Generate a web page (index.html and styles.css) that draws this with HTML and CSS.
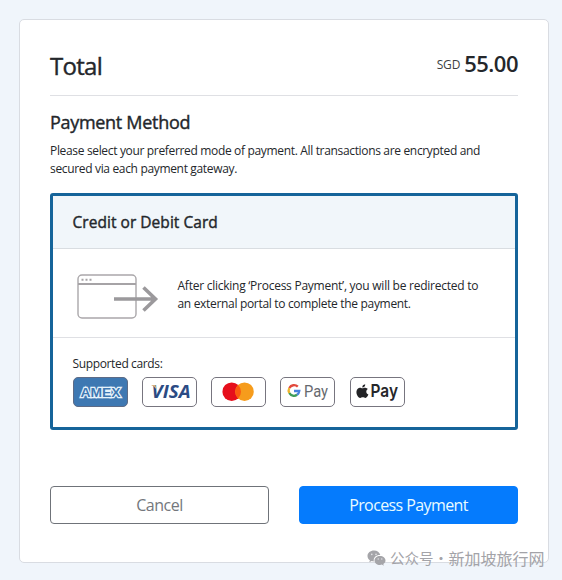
FILE: index.html
```html
<!DOCTYPE html>
<html lang="en">
<head>
<meta charset="utf-8">
<title>Payment</title>
<link rel="stylesheet" href="styles.css">
</head>
<body>
<main class="panel">
  <header class="total">
    <h1 class="total-label">Total</h1>
    <div class="amount"><span class="currency">SGD</span><strong class="value">55.00</strong></div>
  </header>
  <h2 class="title">Payment Method</h2>
  <p class="intro">Please select your preferred mode of payment. All transactions are encrypted and<br>secured via each payment gateway.</p>
  <section class="method">
    <h3 class="method-title">Credit or Debit Card</h3>
    <div class="redirect">
      <svg class="redirect-icon" width="82" height="46" viewBox="0 0 82 46" fill="none">
        <rect x="1" y="1" width="58" height="43" rx="4" stroke="#aaa7aa" stroke-width="1.4"/>
        <path d="M1 10h58" stroke="#a6a3a6" stroke-width="1.8"/>
        <path d="M4.500 5.800h2M8.500 5.800h2M12.500 5.800h2" stroke="#a6a3a6" stroke-width="2"/>
        <path d="M37 25h41M66.500 13.500l12 11.500-12 11.500" stroke="#9b999c" stroke-width="3.600"/>
      </svg>
      <p class="redirect-text">After clicking ‘Process Payment’, you will be redirected to<br><span class="second">an external portal to complete the payment.</span></p>
    </div>
    <div class="supported">
      <p class="supported-label">Supported cards:</p>
      <div class="cards">
        <svg class="card" viewBox="0 0 55 30">
          <rect x=".5" y=".5" width="54" height="29" rx="4.500" fill="#3e78b2" stroke="#5d6b86"/>
          <text x="7.500" y="20" class="amex" textLength="40" lengthAdjust="spacingAndGlyphs">AMEX</text>
        </svg>
        <svg class="card" viewBox="0 0 55 30">
          <rect x=".5" y=".5" width="54" height="29" rx="4.500" fill="#fff" stroke="#77757f"/>
          <text x="9.500" y="20.700" class="visa" textLength="39" lengthAdjust="spacingAndGlyphs">VISA</text>
          <path d="M9 8h4.500l1 4.500q-2-3.500-5.500-4.500z" fill="#d8b27c"/>
        </svg>
        <svg class="card" viewBox="0 0 55 30">
          <rect x=".5" y=".5" width="54" height="29" rx="4.500" fill="#fff" stroke="#77757f"/>
          <circle cx="20.700" cy="14.700" r="9.300" fill="#e60f1c"/>
          <circle cx="33.500" cy="14.700" r="9.300" fill="#f69c1c"/>
          <path d="M27.100 7.950a9.300 9.300 0 0 1 0 13.500a9.300 9.300 0 0 1 0-13.500z" fill="#fb5b10"/>
        </svg>
        <svg class="card" viewBox="0 0 55 30">
          <rect x=".5" y=".5" width="54" height="29" rx="4.500" fill="#fff" stroke="#77757f"/>
          <g fill="none" stroke-width="2.300">
            <path d="M17.800 9.700A5.400 5.400 0 0 0 9.300 11" stroke="#e2493d"/>
            <path d="M9.300 11a5.400 5.400 0 0 0 0 5" stroke="#efb52e"/>
            <path d="M9.300 16a5.400 5.400 0 0 0 7.800 1.800" stroke="#3e9d59"/>
            <path d="M17.100 17.800A5.400 5.400 0 0 0 19.300 14H14" stroke="#4682de"/>
          </g>
          <text x="24" y="19.500" class="gpay" textLength="24" lengthAdjust="spacingAndGlyphs">Pay</text>
        </svg>
        <svg class="card" viewBox="0 0 55 30">
          <rect x=".5" y=".5" width="54" height="29" rx="4.500" fill="#fff" stroke="#77757f"/>
          <path fill="#222326" d="M15.200 7.300q.2 3-2.900 3.300q-.1-2.800 2.900-3.300zM12.400 11.300c1 0 1.700-.7 2.900-.6q1.700.1 2.600 1.400c-2.300 1.400-2 4.600.5 5.500-.7 1.700-1.700 3.300-2.900 3.300-1 0-1.500-.6-2.700-.6s-1.700.6-2.600.6c-2.200 0-4.200-4-3.700-6.700.4-2.300 1.900-3.500 3.400-3.500 1 0 1.700.6 2.500.6z"/>
          <text x="20.500" y="20.300" class="apay" textLength="27.500" lengthAdjust="spacingAndGlyphs">Pay</text>
        </svg>
      </div>
    </div>
  </section>
  <div class="actions">
    <button class="btn cancel" type="button">Cancel</button>
    <button class="btn process" type="button">Process Payment</button>
  </div>
</main>
<div class="watermark">
  <svg width="19" height="16" viewBox="0 0 19 16">
    <path fill="#a5a5a9" d="M7 .5c-3.700 0-6.500 2.400-6.500 5.500 0 1.800.9 3.300 2.400 4.300l-.6 2 2.400-1.200q1 .3 2.100.3C6.200 7.500 9 4.900 13.300 5 12.700 2.300 10.200.5 7 .5z"/>
    <path fill="#a5a5a9" d="M13 5.900c-3 0-5.500 2-5.500 4.500s2.400 4.500 5.500 4.500q1 0 1.800-.3l2 1.100-.5-1.700c1.400-.9 2.200-2.100 2.200-3.600 0-2.500-2.500-4.500-5.500-4.500z"/>
    <g fill="#e4e4e7"><circle cx="4.800" cy="4.400" r=".8"/><circle cx="9" cy="4.400" r=".8"/><circle cx="11.200" cy="9" r=".7"/><circle cx="14.800" cy="9" r=".7"/></g>
  </svg>
  <span class="wm-a">公众号</span><span class="wm-dot">·</span><span class="wm-b">新加坡旅行网</span>
</div>
</body>
</html>
```

FILE: styles.css
```css
* { box-sizing: border-box; }
body {
  margin: 0;
  height: 580px;
  padding: 19px 13px 0 19px;
  overflow: hidden;
  position: relative;
  background: #f0f5fb;
  color: #24272b;
  font-family: "Open Sans", "Noto Sans", sans-serif;
}
h1, h2, h3, p { margin: 0; font-weight: 400; white-space: nowrap; }
h1, h2, h3 { -webkit-text-stroke: .4px currentColor; }
.panel {
  width: 530px;
  height: 544px;
  padding: 0 30px;
  border: 1px solid #d9dce2;
  border-radius: 5px;
  background: #fff;
}
.total {
  height: 76px;
  padding-top: 28px;
  border-bottom: 1px solid #dfe0e4;
  display: flex;
  justify-content: space-between;
}
.total-label { font-size: 24px; line-height: 36px; letter-spacing: -.7px; }
.amount { display: flex; align-items: baseline; gap: 4px; line-height: 30px; }
.currency { font-size: 12px; letter-spacing: -.2px; color: #3c3f43; position: relative; top: -3px; }
.value { font-size: 22px; font-weight: 600; letter-spacing: -.5px; }
.title { margin-top: 13px; font-size: 18px; line-height: 26px; letter-spacing: -.3px; }
.intro { margin-top: 7px; font-size: 12px; line-height: 18px; letter-spacing: -.335px; }
.method {
  margin-top: 15px;
  height: 237px;
  border: 3px solid #15649a;
  border-radius: 3px;
}
.method-title {
  height: 53px;
  padding-left: 19.500px;
  font-size: 15.500px;
  line-height: 53px;
  letter-spacing: .04px;
  background: #f1f6fa;
  border-bottom: 1px solid #d9dde1;
}
.redirect {
  height: 89px;
  padding-left: 24px;
  display: flex;
  align-items: center;
  gap: 18.500px;
  border-bottom: 1px solid #dfe0e4;
}
.redirect-icon { margin-top: 7px; }
.redirect-text { font-size: 12px; line-height: 18px; margin-top: 3px; letter-spacing: -.25px; }
.second { letter-spacing: -.32px; }
.supported { padding: 17px 0 0 19.500px; }
.supported-label { font-size: 12px; line-height: 18px; letter-spacing: -.36px; }
.cards { display: flex; gap: 14.300px; margin-top: 4px; }
.card { width: 55px; height: 30px; }
.amex { font: bold 13.500px "Liberation Sans", sans-serif; fill: #3e78b2; stroke: #e6f2fb; stroke-width: 2.400px; paint-order: stroke; }
.visa { font: italic bold 18px "Open Sans", sans-serif; fill: #2b4b84; }
.gpay { font: 400 16.500px Roboto, sans-serif; fill: #66696f; }
.apay { font: 600 17.500px Inter, sans-serif; fill: #26272a; }
.actions { display: grid; grid-template-columns: 219px 219px; gap: 30px; margin-top: 56px; }
.btn {
  height: 38px;
  padding: 0;
  border: 1px solid #6f7379;
  border-radius: 4px;
  background: #fff;
  color: #74777c;
  font: 400 16px "Open Sans", sans-serif;
  letter-spacing: -.5px;
}
.process { background: #057bfd; border-color: #057bfd; color: #e9fbff; letter-spacing: -.6px; }
.watermark {
  position: absolute;
  left: 367px;
  top: 547px;
  height: 22px;
  display: flex;
  align-items: center;
  color: #a3a3a8;
  font: 14.500px/22px "Noto Sans CJK SC", sans-serif;
  white-space: nowrap;
}
.wm-a { margin-left: 4px; }
.wm-dot { width: 15px; text-align: center; }
.wm-b { font-size: 16px; }
```
